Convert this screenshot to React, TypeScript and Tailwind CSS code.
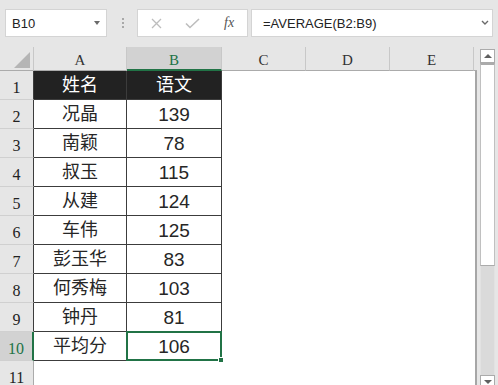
import React from "react";

const rows: [string, string][] = [
  ["况晶", "139"],
  ["南颖", "78"],
  ["叔玉", "115"],
  ["从建", "124"],
  ["车伟", "125"],
  ["彭玉华", "83"],
  ["何秀梅", "103"],
  ["钟丹", "81"],
  ["平均分", "106"],
];

export default function App() {
  return (
    <div className="w-[498px] h-[385px] overflow-hidden bg-[#e6e6e6] font-['Liberation_Sans','Noto_Sans_CJK_SC',sans-serif]">
      {/* Toolbar */}
      <div className="h-[47px] flex items-start pt-[9px]">
        <div className="ml-[5px] w-[102px] h-[28px] bg-white border border-[#d4d4d4] flex items-center justify-between pl-[6px] pr-[6px]">
          <span className="text-[13px] leading-none text-[#222]">B10</span>
          <span className="w-0 h-0 border-x-[3.5px] border-x-transparent border-t-[4px] border-t-[#6a6a6a]" />
        </div>
        <div className="w-[30px] h-[28px] flex flex-col items-center justify-center gap-[2px] pl-[1px]">
          <span className="w-[2px] h-[2px] bg-[#a8a8a8]" />
          <span className="w-[2px] h-[2px] bg-[#a8a8a8]" />
          <span className="w-[2px] h-[2px] bg-[#a8a8a8]" />
        </div>
        <div className="w-[111px] h-[28px] bg-white border border-[#d4d4d4] flex items-center">
          <svg className="ml-[13px]" width="11" height="11" viewBox="0 0 11 11">
            <path d="M1 1 L10 10 M10 1 L1 10" stroke="#bdbdbd" strokeWidth="1.3" fill="none" />
          </svg>
          <svg className="ml-[23px]" width="15" height="11" viewBox="0 0 15 11">
            <path d="M1 5.5 L5 9.5 L14 1" stroke="#bdbdbd" strokeWidth="1.6" fill="none" />
          </svg>
          <span className="ml-[24px] text-[14px] leading-none italic text-[#555] font-['Liberation_Serif',serif]">
            fx
          </span>
        </div>
        <div className="ml-[3px] w-[242px] h-[28px] bg-white border border-[#d4d4d4] flex items-center justify-between pl-[11px] pr-[3px]">
          <span className="text-[13px] leading-none text-[#222]">=AVERAGE(B2:B9)</span>
          <svg width="8" height="6" viewBox="0 0 8 6">
            <path d="M1 1 L4 4 L7 1" stroke="#6a6a6a" strokeWidth="1.4" fill="none" />
          </svg>
        </div>
      </div>

      {/* Sheet */}
      <div className="flex items-start">
        <div className="w-[477px] flex flex-col">
          {/* Column headers */}
          <div className="h-[24px] flex text-[#333] text-[15px] font-['Liberation_Serif',serif]">
            <div className="w-[34px] border-r border-b border-[#ababab] border-r-[#c8c8c8] flex items-end justify-end pr-[3px] pb-[2px]">
              <svg width="16" height="16" viewBox="0 0 16 16">
                <polygon points="16,0 16,16 0,16" fill="#b5b5b5" />
              </svg>
            </div>
            <div className="w-[93px] border-r border-r-[#c8c8c8] border-b border-b-[#ababab] flex items-center justify-center pt-[3px]">
              A
            </div>
            <div className="w-[95px] bg-[#d2d2d2] border-r border-r-[#c8c8c8] border-b-2 border-b-[#217346] text-[#217346] flex items-center justify-center pt-[4px]">
              B
            </div>
            <div className="w-[84px] border-r border-r-[#c8c8c8] border-b border-b-[#ababab] flex items-center justify-center pt-[3px]">
              C
            </div>
            <div className="w-[84px] border-r border-r-[#c8c8c8] border-b border-b-[#ababab] flex items-center justify-center pt-[3px]">
              D
            </div>
            <div className="w-[84px] border-r border-r-[#c8c8c8] border-b border-b-[#ababab] flex items-center justify-center pt-[3px]">
              E
            </div>
            <div className="flex-1 border-b border-b-[#ababab]" />
          </div>

          {/* Body */}
          <div className="flex flex-col border-r-2 border-r-[#a6a6a6] bg-white">
            <div className="h-[29px] flex">
              <div className="w-[34px] bg-[#e6e6e6] border-r border-r-[#3c3c3c] border-b border-b-[#d0d0d0] flex items-end justify-center pb-[3px] text-[16px] leading-none text-[#222] font-['Liberation_Serif',serif]">
                1
              </div>
              <div className="w-[93px] bg-[#222] border-r border-b border-[#3c3c3c] flex items-center justify-center text-white text-[18px] leading-none">
                姓名
              </div>
              <div className="w-[95px] bg-[#222] border-r border-b border-[#3c3c3c] flex items-center justify-center text-white text-[18px] leading-none">
                语文
              </div>
              <div className="flex-1" />
            </div>
            {rows.map(([name, score], i) => {
              const n = i + 2;
              const sel = n === 10;
              return (
                <div key={n} className="h-[29px] flex">
                  {sel ? (
                    <div className="w-[34px] bg-[#d2d2d2] border-r-2 border-r-[#217346] border-b border-b-[#d0d0d0] flex items-end justify-center pb-[3px] text-[16px] leading-none text-[#217346] font-['Liberation_Serif',serif]">
                      {n}
                    </div>
                  ) : (
                    <div className="w-[34px] bg-[#e6e6e6] border-r border-r-[#3c3c3c] border-b border-b-[#d0d0d0] flex items-end justify-center pb-[3px] text-[16px] leading-none text-[#222] font-['Liberation_Serif',serif]">
                      {n}
                    </div>
                  )}
                  <div className="w-[93px] border-r border-b border-[#3c3c3c] flex items-center justify-center text-[#262626] text-[18px] leading-none">
                    {name}
                  </div>
                  <div className="relative w-[95px] border-r border-b border-[#3c3c3c] flex items-center justify-center text-[#262626] text-[19px] leading-none">
                    {score}
                    {sel && (
                      <>
                        <div className="absolute -left-[1px] -top-[1px] -right-[1px] -bottom-[1px] border-2 border-[#217346]" />
                        <div className="absolute -right-[3px] -bottom-[3px] w-[6px] h-[6px] bg-[#217346] border border-white" />
                      </>
                    )}
                  </div>
                  <div className="flex-1" />
                </div>
              );
            })}
            <div className="h-[29px] flex">
              <div className="w-[34px] bg-[#e6e6e6] border-r border-r-[#ababab] border-b border-b-[#d0d0d0] flex items-end justify-center pb-[3px] text-[16px] leading-none text-[#222] font-['Liberation_Serif',serif]">
                11
              </div>
              <div className="flex-1" />
            </div>
          </div>
        </div>

        {/* Scrollbar */}
        <div className="w-[21px] pl-[3px] pt-[2px] flex flex-col">
          <div className="w-[15px] h-[14px] bg-white border border-[#ababab] flex items-center justify-center">
            <span className="w-0 h-0 border-x-[4px] border-x-transparent border-b-[4px] border-b-[#606060]" />
          </div>
          <div className="w-[15px] h-[203px] bg-white border-x border-x-[#c0c0c0] border-t-2 border-t-[#ababab] border-b border-b-[#ababab]" />
          <div className="w-[15px] h-[109px] bg-[#dadada] border-x border-x-[#e2e2e2]" />
          <div className="w-[15px] h-[14px] bg-white border border-[#ababab] flex items-center justify-center">
            <span className="w-0 h-0 border-x-[4px] border-x-transparent border-t-[4px] border-t-[#606060]" />
          </div>
        </div>
      </div>
    </div>
  );
}
